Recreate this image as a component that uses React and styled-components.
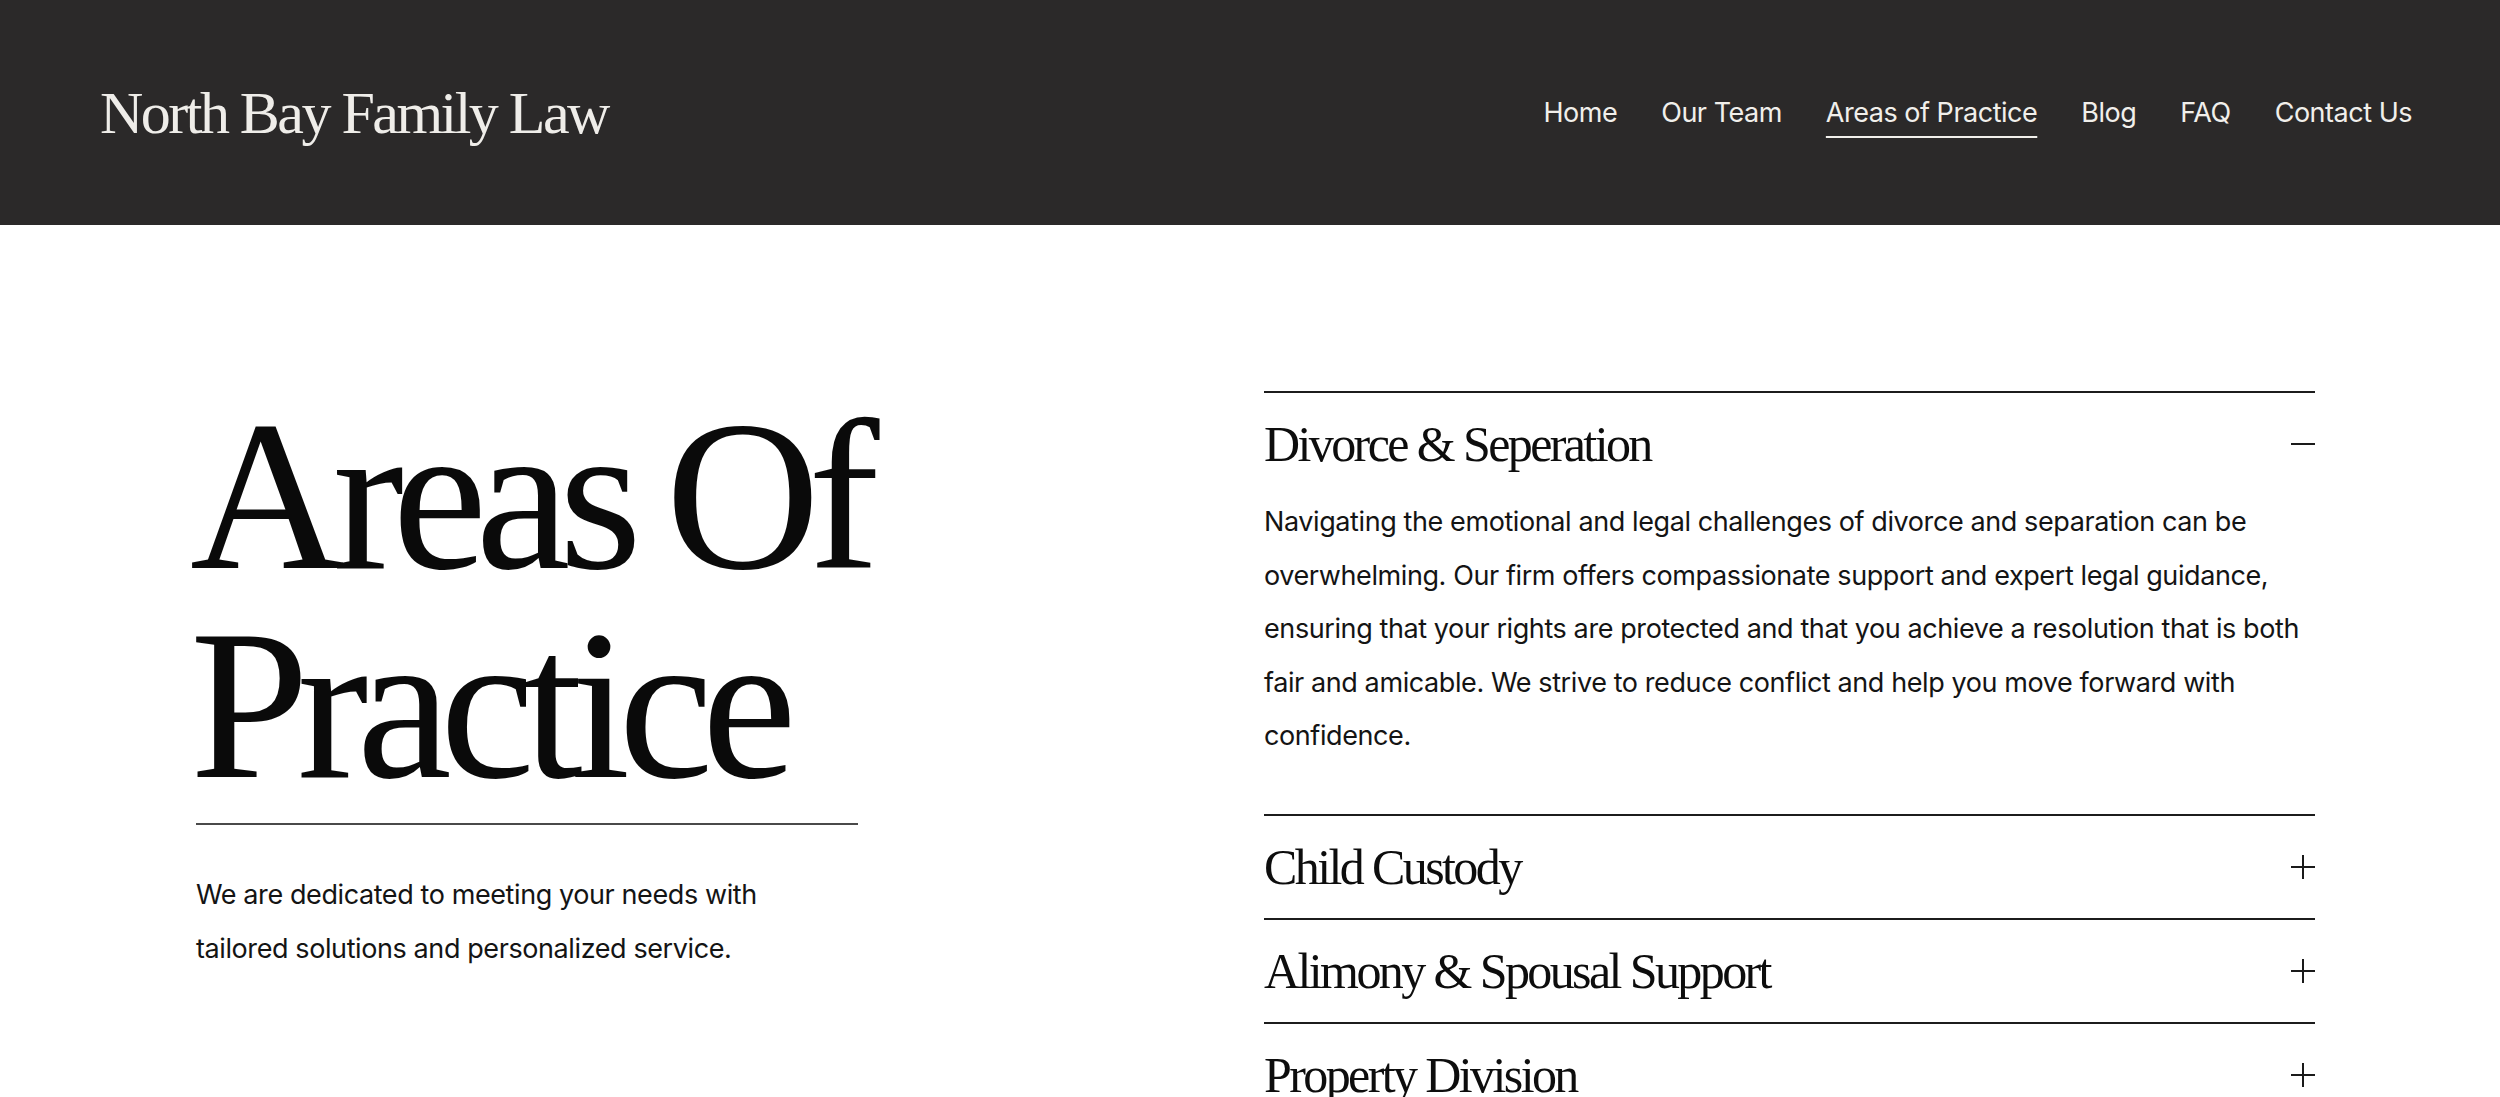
import React, { useState } from 'react';
import styled, { createGlobalStyle } from 'styled-components';

const GlobalStyle = createGlobalStyle`
  html, body {
    margin: 0;
    padding: 0;
    background: #ffffff;
  }
  body {
    font-family: Inter, "Noto Sans", "Liberation Sans", sans-serif;
    color: #111111;
    overflow: hidden;
  }
  * { box-sizing: border-box; }
`;

const serif = `"Liberation Serif", "DejaVu Serif", serif`;

const Header = styled.header`
  height: 225px;
  background: #2b2929;
  display: flex;
  align-items: center;
  justify-content: space-between;
  padding: 0 88px 0 100px;
`;

const Logo = styled.a`
  font-family: ${serif};
  font-size: 60px;
  letter-spacing: -0.042em;
  color: #efede9;
  text-decoration: none;
  margin-top: 2px;
`;

const Nav = styled.nav`
  display: flex;
  gap: 44px;
`;

const NavLink = styled.a`
  font-size: 27px;
  letter-spacing: -0.018em;
  color: #f1efeb;
  text-decoration: ${(p) => (p.$active ? 'underline' : 'none')};
  text-decoration-thickness: 2px;
  text-underline-offset: 14px;
`;

const Main = styled.main`
  display: grid;
  grid-template-columns: 662px 1051px;
  justify-content: space-between;
  padding: 166px 185px 0 196px;
`;

const Intro = styled.section`
  display: flex;
  flex-direction: column;
`;

const Title = styled.h1`
  margin: 0 0 0 -6px;
  font-family: ${serif};
  font-weight: 400;
  font-size: 214px;
  line-height: 209px;
  letter-spacing: -0.055em;
  word-spacing: -0.03em;
  white-space: nowrap;
  color: #0a0a0a;
`;

const Rule = styled.hr`
  margin: 14px 0 0;
  border: 0;
  border-top: 2px solid #4a4a4a;
  width: 100%;
`;

const Lead = styled.p`
  margin: 43px 0 0;
  max-width: 590px;
  font-size: 27px;
  line-height: 54px;
  letter-spacing: -0.015em;
  color: #141414;
`;

const Accordion = styled.section`
  display: flex;
  flex-direction: column;
`;

const Item = styled.div`
  border-top: 2px solid #1c1c1c;
`;

const ItemHead = styled.button`
  width: 100%;
  height: 102px;
  display: flex;
  align-items: center;
  justify-content: space-between;
  padding: 0;
  border: 0;
  background: none;
  cursor: pointer;
  color: #0d0d0d;
`;

const ItemTitle = styled.span`
  font-family: ${serif};
  font-size: 50px;
  letter-spacing: -0.052em;
  line-height: 1;
`;

const ItemBody = styled.p`
  margin: 0;
  padding: 0 0 51px;
  font-size: 27px;
  line-height: 53.5px;
  letter-spacing: -0.015em;
  color: #141414;
`;

const Toggle = ({ open }) => (
  <svg width="24" height="24" viewBox="0 0 24 24" fill="none" stroke="#1a1a1a" strokeWidth="2">
    <line x1="0" y1="12" x2="24" y2="12" />
    {!open && <line x1="12" y1="0" x2="12" y2="24" />}
  </svg>
);

const areas = [
  {
    title: 'Divorce & Seperation',
    body:
      'Navigating the emotional and legal challenges of divorce and separation can be overwhelming. Our firm offers compassionate support and expert legal guidance, ensuring that your rights are protected and that you achieve a resolution that is both fair and amicable. We strive to reduce conflict and help you move forward with confidence.',
  },
  { title: 'Child Custody', body: '' },
  { title: 'Alimony & Spousal Support', body: '' },
  { title: 'Property Division', body: '' },
];

const links = ['Home', 'Our Team', 'Areas of Practice', 'Blog', 'FAQ', 'Contact Us'];

export default function App() {
  const [open, setOpen] = useState(0);

  return (
    <>
      <GlobalStyle />
      <Header>
        <Logo href="#">North Bay Family Law</Logo>
        <Nav>
          {links.map((l) => (
            <NavLink key={l} href="#" $active={l === 'Areas of Practice'}>
              {l}
            </NavLink>
          ))}
        </Nav>
      </Header>
      <Main>
        <Intro>
          <Title>
            Areas Of
            <br />
            Practice
          </Title>
          <Rule />
          <Lead>
            We are dedicated to meeting your needs with tailored solutions and personalized service.
          </Lead>
        </Intro>
        <Accordion>
          {areas.map((a, i) => (
            <Item key={a.title}>
              <ItemHead onClick={() => setOpen(open === i ? -1 : i)}>
                <ItemTitle>{a.title}</ItemTitle>
                <Toggle open={open === i} />
              </ItemHead>
              {open === i && <ItemBody>{a.body}</ItemBody>}
            </Item>
          ))}
        </Accordion>
      </Main>
    </>
  );
}
